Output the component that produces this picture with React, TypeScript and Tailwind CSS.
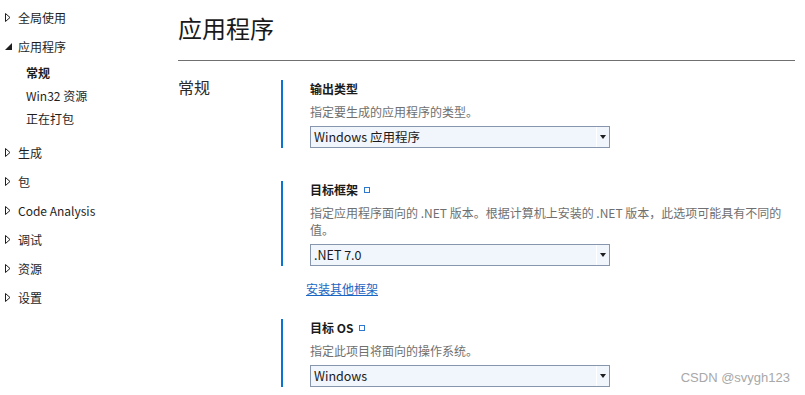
import type { ReactNode } from "react";

// collapsed tree node marker
function Collapsed() {
  return (
    <svg width="6" height="9" viewBox="0 0 6 9" aria-hidden>
      <polygon points="0.5,0.5 5,4.5 0.5,8.5" fill="none" stroke="#1e1e1e" strokeWidth="1" />
    </svg>
  );
}

function Expanded() {
  return (
    <svg width="7" height="7" viewBox="0 0 7 7" aria-hidden>
      <polygon points="7,0 7,7 0,7" fill="#1e1e1e" />
    </svg>
  );
}

function NavItem({ label, open = false }: { label: string; open?: boolean }) {
  return (
    <div className="flex h-[29px] items-center">
      <span className="flex w-[18px] items-center pl-[5px]">{open ? <Expanded /> : <Collapsed />}</span>
      <span>{label}</span>
    </div>
  );
}

function SubItem({ label, active = false }: { label: string; active?: boolean }) {
  return (
    <div className={"flex h-[23px] items-center pl-[26px] " + (active ? "font-bold" : "")}>{label}</div>
  );
}

function Select({ value }: { value: string }) {
  return (
    <div className="mt-[6px] flex h-[22px] w-[300px] items-center border border-[#8896ad] bg-[#f1f5fc]">
      <span className="flex-1 pl-[3px] text-[12.5px] text-[#1a1a1a]">{value}</span>
      <span className="flex h-full w-[13px] items-center justify-center border-l border-[#ffffff]">
        <svg width="6" height="4" viewBox="0 0 6 4" aria-hidden>
          <polygon points="0,0 6,0 3,4" fill="#1e1e1e" />
        </svg>
      </span>
    </div>
  );
}

function Section({
  title,
  info = false,
  desc,
  value,
  className = "",
}: {
  title: string;
  info?: boolean;
  desc: ReactNode;
  value: string;
  className?: string;
}) {
  return (
    <div className={"border-l-2 border-[#0a74d0] pl-[27px] " + className}>
      <div className="flex items-center gap-[6px] font-bold leading-[18px] text-[#1a1a1a]">
        {title}
        {info && <span className="inline-block size-[6px] border border-[#2f78d0]" />}
      </div>
      <p className="mt-[5px] w-[482px] leading-[17px] text-[#6f6f6f]">{desc}</p>
      <Select value={value} />
    </div>
  );
}

export default function App() {
  return (
    <div className="relative flex h-[395px] w-[805px] overflow-hidden bg-white font-['Noto_Sans_CJK_SC','Noto_Sans',sans-serif] text-[12px] text-[#1e1e1e]">
      {/* tree */}
      <nav className="w-[178px] shrink-0 pt-[3px]">
        <NavItem label="全局使用" />
        <NavItem label="应用程序" open />
        <SubItem label="常规" active />
        <SubItem label="Win32 资源" />
        <SubItem label="正在打包" />
        <div className="mt-[8px]">
          <NavItem label="生成" />
          <NavItem label="包" />
          <NavItem label="Code Analysis" />
          <NavItem label="调试" />
          <NavItem label="资源" />
          <NavItem label="设置" />
        </div>
      </nav>

      {/* page */}
      <main className="flex-1 pr-[10px] pt-[12px]">
        <h1 className="text-[24px] leading-[32px] text-[#1a1a1a]">应用程序</h1>
        <div className="mt-[16px] h-px bg-[#707070]" />
        <div className="mt-[19px] flex">
          <div className="-mt-[3px] w-[103px] shrink-0 text-[16px] leading-[20px] text-[#2a2a2a]">常规</div>
          <div className="flex flex-col">
            <Section title="输出类型" desc="指定要生成的应用程序的类型。" value="Windows 应用程序" />
            <Section
              className="mt-[33px]"
              title="目标框架"
              info
              desc="指定应用程序面向的 .NET 版本。根据计算机上安装的 .NET 版本，此选项可能具有不同的值。"
              value=".NET 7.0"
            />
            <a className="ml-[25px] mt-[14px] self-start leading-[17px] text-[#1a66c2] underline">安装其他框架</a>
            <Section
              className="mt-[22px]"
              title="目标 OS"
              info
              desc="指定此项目将面向的操作系统。"
              value="Windows"
            />
          </div>
        </div>
      </main>

      <span className="absolute bottom-[8px] right-[15px] font-['Liberation_Sans',sans-serif] text-[13px] text-[#a8a8a8]">
        CSDN @svygh123
      </span>
    </div>
  );
}
